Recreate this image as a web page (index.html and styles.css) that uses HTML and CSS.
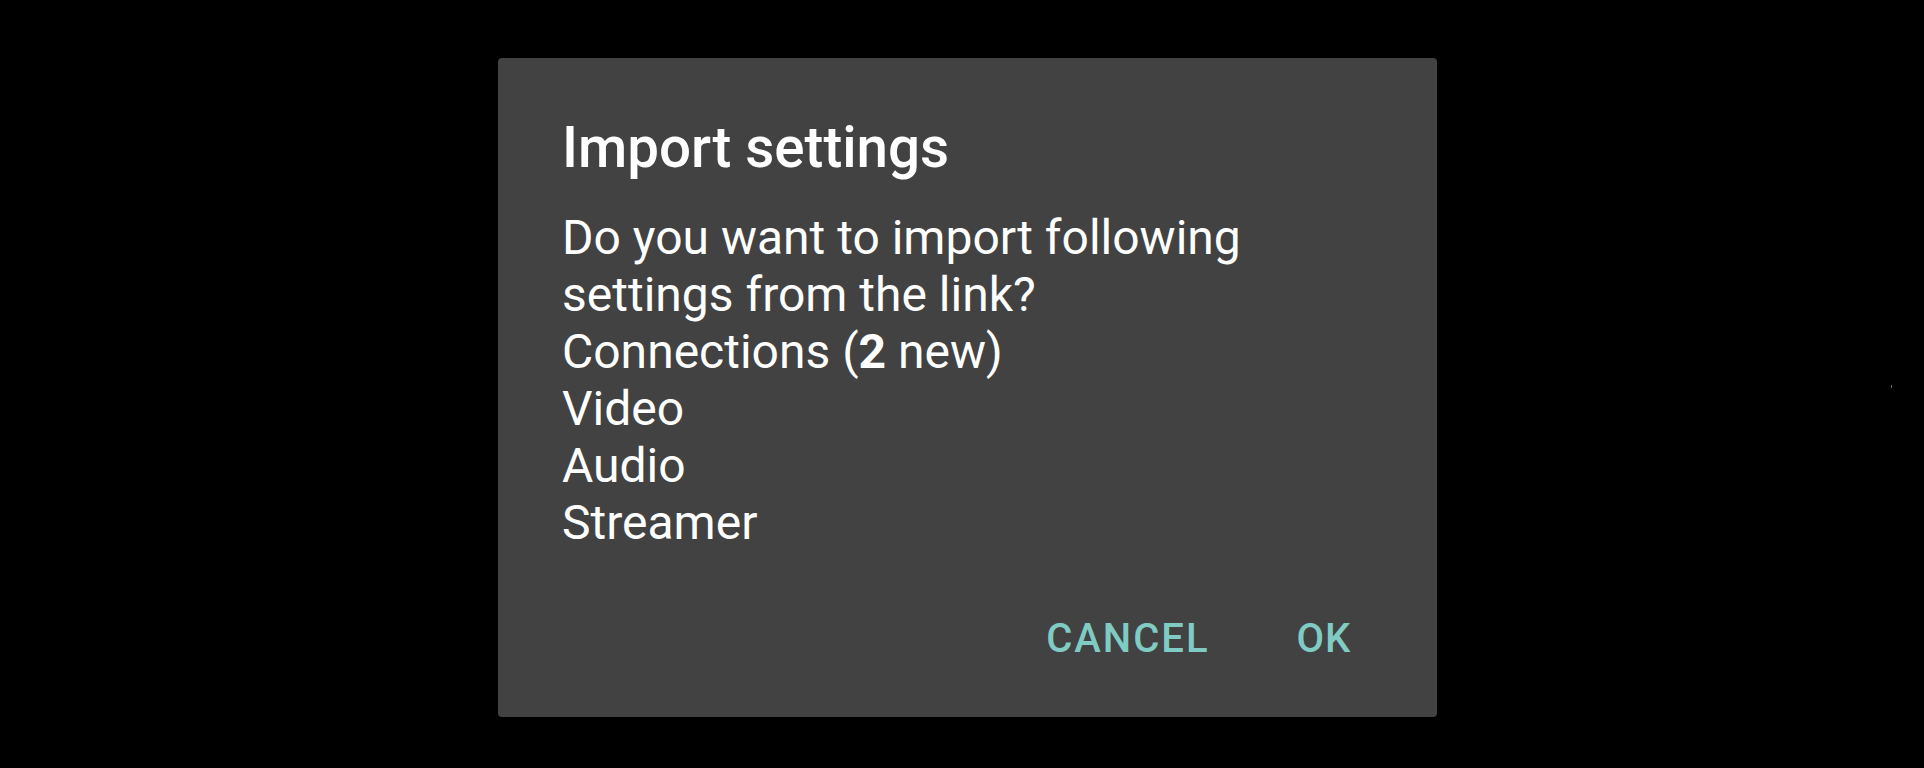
FILE: index.html
```html
<!DOCTYPE html>
<html lang="en">
<head>
<meta charset="utf-8">
<title>Import settings</title>
<link rel="stylesheet" href="styles.css">
</head>
<body>
<div class="dialog" role="dialog">
  <h1 class="title">Import settings</h1>
  <div class="message">
    <div>Do you want to import following settings from the link?</div>
    <div>Connections (<b>2</b> new)</div>
    <div>Video</div>
    <div>Audio</div>
    <div>Streamer</div>
  </div>
  <div class="actions">
    <button class="btn">CANCEL</button>
    <button class="btn">OK</button>
  </div>
</div>
<span class="speck"></span>
</body>
</html>
```
FILE: styles.css
```css
html, body {
  margin: 0;
  padding: 0;
  background: #000;
}
body {
  width: 1924px;
  height: 768px;
  overflow: hidden;
  font-family: Roboto, "Noto Sans", "Liberation Sans", sans-serif;
}
.dialog {
  box-sizing: border-box;
  width: 939px;
  height: 659px;
  margin: 58px 0 0 498px;
  background: #424242;
  border-radius: 4px;
  padding: 57px 65px 0 64px;
  display: flex;
  flex-direction: column;
}
.title {
  margin: 0;
  font-size: 56.5px;
  line-height: 67px;
  font-weight: 500;
  color: #ffffff;
}
.message {
  margin-top: 27px;
  font-size: 48px;
  line-height: 57px;
  color: #ffffff;
}
.message b {
  font-weight: 700;
}
.actions {
  margin-top: 64px;
  display: flex;
  justify-content: flex-end;
  gap: 87px;
  padding-right: 21px;
}
.btn {
  background: none;
  border: 0;
  padding: 0;
  font-family: Roboto, "Noto Sans", "Liberation Sans", sans-serif;
  font-size: 40px;
  line-height: 47px;
  font-weight: 500;
  letter-spacing: 0.05em;
  color: #80cbc4;
}
.btn:last-child {
  letter-spacing: 0.02em;
}
.speck {
  position: absolute;
  left: 1891px;
  top: 385px;
  width: 1px;
  height: 3px;
  background: #6a6a6a;
}
```
